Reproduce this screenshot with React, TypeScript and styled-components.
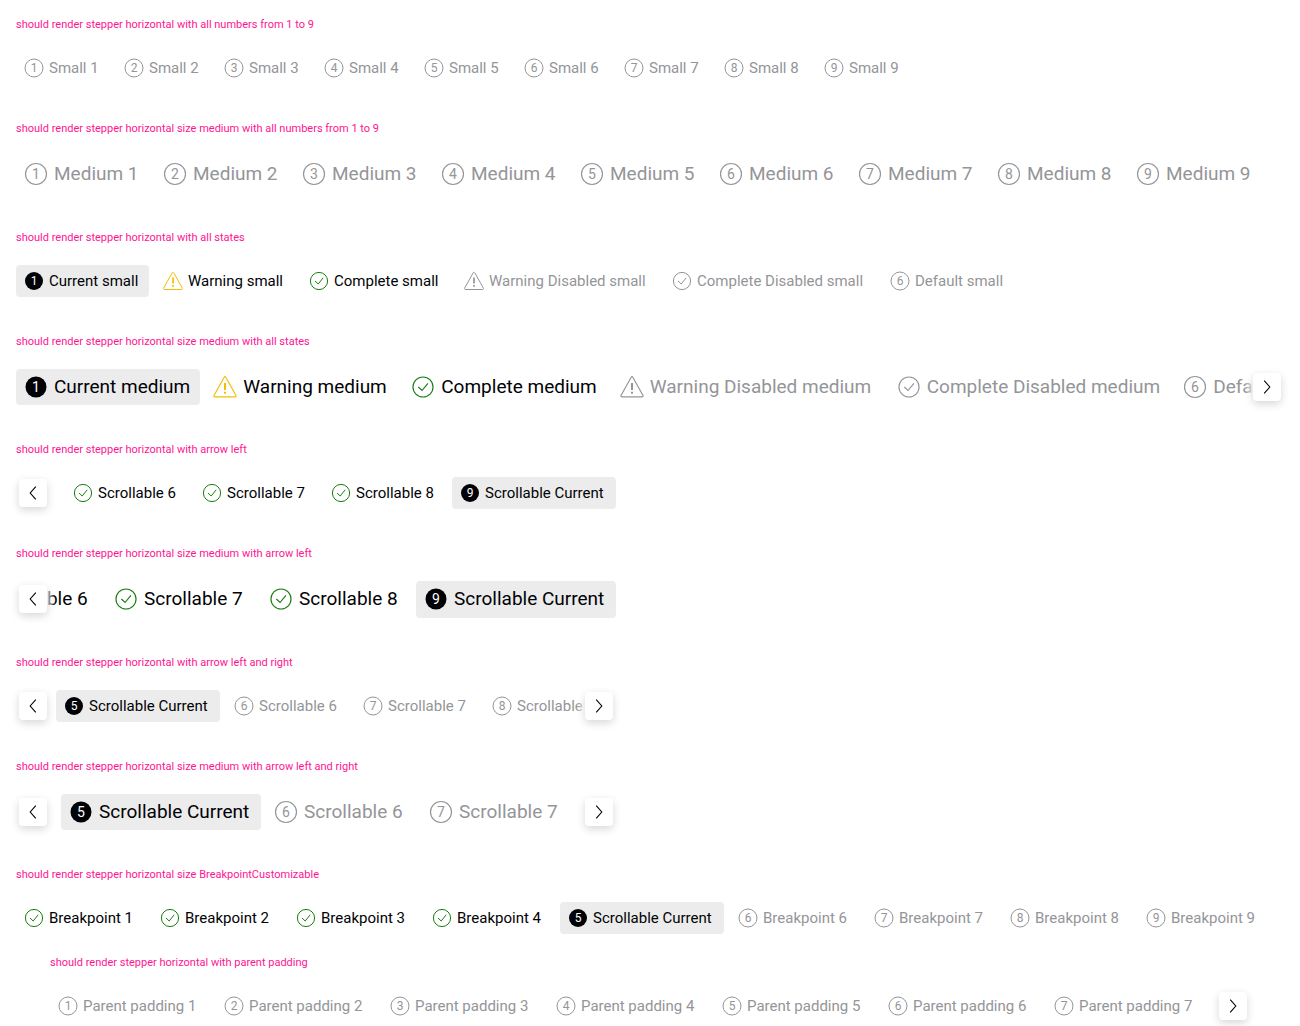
import React, { useLayoutEffect, useRef } from 'react';
import styled, { createGlobalStyle, css } from 'styled-components';

const color = {
  primary: '#010205',
  disabled: '#949598',
  success: '#197e10',
  warning: '#f3be00',
  surface: '#ececec',
  heading: '#ff1493',
};

const GlobalStyle = createGlobalStyle`
  body {
    margin: 0;
    background: #fff;
    font-family: Roboto, "Liberation Sans", sans-serif;
  }
  *, *::before, *::after {
    box-sizing: border-box;
  }
`;

type Size = 'small' | 'medium';
type State = 'current' | 'warning' | 'complete' | 'default';

interface StepData {
  label: string;
  state?: State;
  disabled?: boolean;
  width?: number;
}

const Page = styled.main`
  overflow: hidden;
`;

const Section = styled.section<{ $inset?: boolean; $flush?: boolean }>`
  padding: 16px 16px ${(p) => (p.$flush ? '4px' : '20px')};
  ${(p) => p.$inset && css`padding: 16px 50px 4px;`}
`;

const Heading = styled.h2`
  margin: 0 0 18px;
  font-size: 11px;
  line-height: 18px;
  font-weight: 400;
  color: ${color.heading};
`;

const Frame = styled.div<{ $narrow?: boolean }>`
  position: relative;
  max-width: ${(p) => (p.$narrow ? '600px' : 'none')};
`;

const Scroller = styled.div`
  position: relative;
  overflow-x: auto;
  scrollbar-width: none;
`;

const List = styled.div<{ $size: Size }>`
  display: flex;
  width: max-content;
  gap: ${(p) => (p.$size === 'small' ? '6px' : '5px')};
`;

const StepButton = styled.button<{ $size: Size; $muted: boolean; $current: boolean; $width?: number }>`
  display: flex;
  align-items: center;
  gap: ${(p) => (p.$size === 'small' ? '3px' : '4px')};
  min-width: ${(p) => (p.$width ? `${p.$width}px` : '0')};
  margin: 0;
  padding: 4px 10px 4px 6px;
  border: 0;
  border-radius: 4px;
  background: ${(p) => (p.$current ? color.surface : 'transparent')};
  color: ${(p) => (p.$muted ? color.disabled : color.primary)};
  font-family: inherit;
  font-size: ${(p) => (p.$size === 'small' ? '15px' : '19px')};
  line-height: ${(p) => (p.$size === 'small' ? '24px' : '1.5')};
  white-space: nowrap;
  cursor: ${(p) => (p.$muted ? 'not-allowed' : 'pointer')};
`;

const Icon = styled.svg<{ $size: Size }>`
  flex: none;
  display: block;
  width: ${(p) => (p.$size === 'small' ? '24px' : '28px')};
  height: ${(p) => (p.$size === 'small' ? '24px' : '28px')};
`;

const Digit = styled.text`
  font-family: Roboto, "Liberation Sans", sans-serif;
  font-size: 12px;
  font-weight: 400;
  text-anchor: middle;
`;

const Edge = styled.div<{ $side: 'left' | 'right' }>`
  position: absolute;
  top: 0;
  bottom: 0;
  ${(p) => p.$side}: 0;
  display: flex;
  align-items: center;
  justify-content: ${(p) => (p.$side === 'left' ? 'flex-start' : 'flex-end')};
  width: 40px;
  padding: 0 3px;
  background: linear-gradient(to ${(p) => (p.$side === 'left' ? 'right' : 'left')}, #fff 70%, rgba(255, 255, 255, 0));
  pointer-events: none;
`;

const ArrowButton = styled.button`
  display: grid;
  place-items: center;
  width: 28px;
  height: 28px;
  padding: 0;
  border: 0;
  border-radius: 4px;
  background: #fff;
  box-shadow: 0 3px 8px rgba(0, 0, 0, 0.16);
  color: ${color.primary};
  pointer-events: auto;
  cursor: pointer;
`;

function StateIcon({ size, state, disabled, index }: { size: Size; state: State; disabled?: boolean; index: number }) {
  if (state === 'warning') {
    return (
      <Icon $size={size} viewBox="0 0 24 24" fill="none" stroke={disabled ? color.disabled : color.warning} aria-hidden="true">
        <path d="M11.3 3.6c.3-.6 1.1-.6 1.4 0l8.7 15.6c.3.6 0 1.3-.7 1.3H3.3c-.7 0-1-.7-.7-1.3z" />
        <path d="M12 8.5v6M12 16v1.7" strokeWidth="1.7" />
      </Icon>
    );
  }
  if (state === 'complete') {
    return (
      <Icon $size={size} viewBox="0 0 24 24" fill="none" stroke={disabled ? color.disabled : color.success} aria-hidden="true">
        <circle cx="12" cy="12" r="8.6" />
        <path d="M8 12l3.2 3 5-6.2" />
      </Icon>
    );
  }
  const current = state === 'current';
  return (
    <Icon $size={size} viewBox="0 0 24 24" aria-hidden="true">
      <circle
        cx="12"
        cy="12"
        r="9"
        fill={current ? color.primary : 'none'}
        stroke={current ? 'none' : color.disabled}
      />
      <Digit x="12" y="16.3" fill={current ? '#fff' : color.disabled}>
        {index}
      </Digit>
    </Icon>
  );
}

function Chevron({ side }: { side: 'left' | 'right' }) {
  return (
    <svg width="24" height="24" viewBox="0 0 24 24" fill="none" stroke="currentColor" strokeWidth="1.1" aria-hidden="true">
      <path d={side === 'left' ? 'M14.8 5.6L9.2 12l5.6 6.4' : 'M9.2 5.6l5.6 6.4-5.6 6.4'} />
    </svg>
  );
}

interface StepperProps {
  label: string;
  steps: StepData[];
  size?: Size;
  narrow?: boolean;
  arrows?: ('left' | 'right')[];
  lead?: number;
}

function Stepper({ label, steps, size = 'small', narrow, arrows = [], lead = 0 }: StepperProps) {
  const scroller = useRef<HTMLDivElement>(null);
  const scrollable = arrows.includes('left');

  useLayoutEffect(() => {
    const box = scroller.current;
    const active = box?.querySelector<HTMLElement>('[aria-current="step"]');
    if (box && active && scrollable) {
      box.scrollLeft = active.offsetLeft - lead;
    }
  }, [scrollable, lead]);

  const scrollBy = (side: 'left' | 'right') => {
    scroller.current?.scrollBy({ left: side === 'left' ? -120 : 120, behavior: 'smooth' });
  };

  return (
    <Frame $narrow={narrow}>
      <Scroller ref={scroller}>
        <List $size={size} role="group" aria-label={label}>
          {steps.map(({ label: text, state = 'default', disabled, width }, i) => (
            <StepButton
              key={text + i}
              type="button"
              $size={size}
              $width={width}
              $current={state === 'current'}
              $muted={state === 'default' || !!disabled}
              disabled={state === 'default' || disabled}
              aria-current={state === 'current' ? 'step' : undefined}
            >
              <StateIcon size={size} state={state} disabled={disabled} index={i + 1} />
              {text}
            </StepButton>
          ))}
        </List>
      </Scroller>
      {arrows.map((side) => (
        <Edge key={side} $side={side}>
          <ArrowButton type="button" aria-label={side === 'left' ? 'prev' : 'next'} onClick={() => scrollBy(side)}>
            <Chevron side={side} />
          </ArrowButton>
        </Edge>
      ))}
    </Frame>
  );
}

const numbered = (name: string, width: number): StepData[] =>
  Array.from({ length: 9 }, (_, i) => ({ label: `${name} ${i + 1}`, width }));

const progress = (name: string, current: number, width: number, currentWidth: number): StepData[] =>
  numbered(name, width).map((step, i) => {
    if (i + 1 < current) return { ...step, state: 'complete' };
    if (i + 1 === current) return { label: 'Scrollable Current', state: 'current', width: currentWidth };
    return step;
  });

const allStates = (size: Size, widths: number[]): StepData[] => [
  { label: `Current ${size}`, state: 'current', width: widths[0] },
  { label: `Warning ${size}`, state: 'warning', width: widths[1] },
  { label: `Complete ${size}`, state: 'complete', width: widths[2] },
  { label: `Warning Disabled ${size}`, state: 'warning', disabled: true, width: widths[3] },
  { label: `Complete Disabled ${size}`, state: 'complete', disabled: true, width: widths[4] },
  { label: `Default ${size}` },
];

interface Example extends Omit<StepperProps, 'label'> {
  title: string;
  inset?: boolean;
}

const examples: Example[] = [
  { title: 'with all numbers from 1 to 9', steps: numbered('Small', 94) },
  { title: 'size medium with all numbers from 1 to 9', size: 'medium', steps: numbered('Medium', 134) },
  { title: 'with all states', steps: allStates('small', [133, 140, 149, 202, 212]) },
  { title: 'size medium with all states', size: 'medium', steps: allStates('medium', [184, 193, 200, 272, 281]), arrows: ['right'] },
  { title: 'with arrow left', steps: progress('Scrollable', 9, 123, 164), narrow: true, arrows: ['left'] },
  { title: 'size medium with arrow left', size: 'medium', steps: progress('Scrollable', 9, 150, 200), narrow: true, arrows: ['left'] },
  { title: 'with arrow left and right', steps: progress('Scrollable', 5, 123, 164), narrow: true, arrows: ['left', 'right'], lead: 40 },
  { title: 'size medium with arrow left and right', size: 'medium', steps: progress('Scrollable', 5, 150, 200), narrow: true, arrows: ['left', 'right'], lead: 45 },
  { title: 'size BreakpointCustomizable', steps: progress('Breakpoint', 5, 130, 164) },
  { title: 'with parent padding', steps: numbered('Parent padding', 160), arrows: ['right'], inset: true },
];

export default function App() {
  return (
    <>
      <GlobalStyle />
      <Page>
        {examples.map(({ title, inset, ...stepper }, i) => {
          const text = `should render stepper horizontal ${title}`;
          return (
            <Section key={title} $inset={inset} $flush={i === examples.length - 2}>
              <Heading>{text}</Heading>
              <Stepper label={text} {...stepper} />
            </Section>
          );
        })}
      </Page>
    </>
  );
}
